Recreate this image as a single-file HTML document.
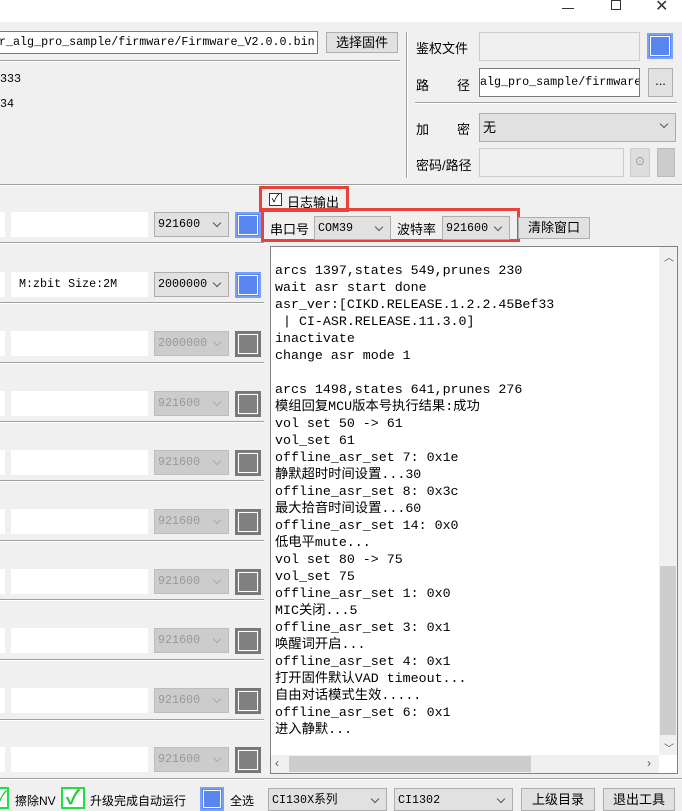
<!DOCTYPE html>
<html><head><meta charset="utf-8"><style>
*{box-sizing:border-box;margin:0;padding:0}
body{width:682px;height:811px;background:#f0f0f0;position:relative;overflow:hidden;font-family:"Liberation Sans","Noto Sans CJK SC",sans-serif;font-size:13px;color:#000}
.a{position:absolute}
.mono{font-family:"Liberation Mono","Noto Sans CJK SC",monospace}
.inp{position:absolute;background:#fff;border:1px solid #7a7a7a}
.btn{position:absolute;background:#e1e1e1;border:1px solid #adadad;text-align:center}
.sel{position:absolute;background:#e1e1e1;border:1px solid #adadad;font-family:"Liberation Mono",monospace;font-size:11.7px;padding-left:3px;line-height:22px}
.sel:after{content:"";position:absolute;right:8px;top:7px;width:5px;height:5px;border-right:1px solid #555;border-bottom:1px solid #555;transform:rotate(45deg)}
.dis{color:#999;background:#ccc;border-color:#bdbdbd}
.dis:after{border-color:#aaa}
.sq{position:absolute;width:26px;height:26px;border:2px solid #7aa0ff;background:#5a86f0;outline:1px solid #fff;outline-offset:-4px}
.sqg{border-color:#777;background:#808080}
.line{position:absolute;height:2px;border-top:1px solid #a0a0a0;border-bottom:1px solid #fff}
.red{position:absolute;border:3px solid #e8433a}
</style></head><body>
<div class="a" style="left:0;top:0;width:682px;height:22px;background:#fff"></div>
<div class="a" style="left:562px;top:8px;width:12px;height:1px;background:#333"></div>
<div class="a" style="left:611px;top:0;width:10px;height:10px;border:1px solid #333"></div>
<div class="a" style="left:655px;top:-4px;font-size:16px;color:#333">✕</div>

<div class="inp mono" style="left:-2px;top:31px;width:320px;height:23px;line-height:21px;font-size:11.7px;white-space:nowrap;overflow:hidden">r_alg_pro_sample/firmware/Firmware_V2.0.0.bin</div>
<div class="btn" style="left:326px;top:32px;width:72px;height:21px;line-height:19px">选择固件</div>
<div class="line" style="left:0;top:60px;width:400px"></div>
<div class="a mono" style="left:0;top:72px;font-size:11.7px">333</div>
<div class="a mono" style="left:0;top:97px;font-size:11.7px">34</div>
<div class="a" style="left:406px;top:32px;width:2px;height:146px;border-left:1px solid #a0a0a0;border-right:1px solid #fff"></div>

<div class="a" style="left:416px;top:38px">鉴权文件</div>
<div class="a" style="left:479px;top:32px;width:161px;height:29px;border:1px solid #ccc;background:#f0f0f0"></div>
<div class="sq" style="left:647px;top:33px"></div>
<div class="a" style="left:416px;top:75px">路</div><div class="a" style="left:457px;top:75px">径</div>
<div class="inp mono" style="left:479px;top:68px;width:161px;height:29px;line-height:27px;overflow:hidden;white-space:nowrap;font-size:11.7px">alg_pro_sample/firmware</div>
<div class="btn" style="left:648px;top:68px;width:25px;height:29px;line-height:24px">...</div>
<div class="line" style="left:415px;top:102px;width:262px"></div>
<div class="a" style="left:416px;top:119px">加</div><div class="a" style="left:457px;top:119px">密</div>
<div class="sel" style="left:479px;top:113px;width:197px;height:29px;line-height:27px;font-size:13px;font-family:'Liberation Sans','Noto Sans CJK SC',sans-serif">无</div>
<div class="a" style="left:416px;top:155px">密码/路径</div>
<div class="a" style="left:479px;top:148px;width:145px;height:29px;border:1px solid #ccc;background:#f0f0f0"></div>
<div class="a" style="left:630px;top:148px;width:20px;height:29px;background:#ddd;border:1px solid #ccc;color:#888;font-size:10px;text-align:center;line-height:27px">⊙</div>
<div class="a" style="left:657px;top:148px;width:18px;height:29px;background:#ccc;border:1px solid #bbb"></div>

<div class="line" style="left:0;top:184px;width:682px"></div>

<div class="red" style="left:259px;top:186px;width:90px;height:26px"></div>
<div class="a" style="left:269px;top:193px;width:13px;height:13px;border:1px solid #333;background:#fff;font-size:11px;line-height:11px;text-align:center">✓</div>
<div class="a" style="left:287px;top:192px">日志输出</div>
<div class="red" style="left:261px;top:208px;width:259px;height:34px"></div>
<div class="a" style="left:270px;top:219px">串口号</div>
<div class="sel" style="left:314px;top:216px;width:77px;height:24px">COM39</div>
<div class="a" style="left:397px;top:219px">波特率</div>
<div class="sel" style="left:442px;top:216px;width:68px;height:24px">921600</div>
<div class="btn" style="left:518px;top:217px;width:72px;height:22px;line-height:20px">清除窗口</div>

<div class="a" style="left:0;top:212px;width:5px;height:25px;background:#fff"></div><div class="a" style="left:11px;top:212px;width:137px;height:25px;background:#fff"></div><div class="sel" style="left:154px;top:212px;width:75px;height:25px">921600</div><div class="sq" style="left:235px;top:212px"></div>
<div class="line" style="left:0;top:242px;width:264px"></div>
<div class="a" style="left:0;top:272px;width:5px;height:25px;background:#fff"></div><div class="a mono" style="left:11px;top:272px;width:137px;height:25px;background:#fff;padding-left:8px;line-height:25px;font-size:11.7px">M:zbit Size:2M</div><div class="sel" style="left:154px;top:272px;width:75px;height:25px">2000000</div><div class="sq" style="left:235px;top:272px"></div>
<div class="line" style="left:0;top:302px;width:264px"></div>
<div class="a" style="left:0;top:331px;width:5px;height:25px;background:#fff"></div><div class="a" style="left:11px;top:331px;width:137px;height:25px;background:#fff"></div><div class="sel dis" style="left:154px;top:331px;width:75px;height:25px">2000000</div><div class="sq sqg" style="left:235px;top:331px"></div>
<div class="line" style="left:0;top:362px;width:264px"></div>
<div class="a" style="left:0;top:391px;width:5px;height:25px;background:#fff"></div><div class="a" style="left:11px;top:391px;width:137px;height:25px;background:#fff"></div><div class="sel dis" style="left:154px;top:391px;width:75px;height:25px">921600</div><div class="sq sqg" style="left:235px;top:391px"></div>
<div class="line" style="left:0;top:421px;width:264px"></div>
<div class="a" style="left:0;top:450px;width:5px;height:25px;background:#fff"></div><div class="a" style="left:11px;top:450px;width:137px;height:25px;background:#fff"></div><div class="sel dis" style="left:154px;top:450px;width:75px;height:25px">921600</div><div class="sq sqg" style="left:235px;top:450px"></div>
<div class="line" style="left:0;top:480px;width:264px"></div>
<div class="a" style="left:0;top:509px;width:5px;height:25px;background:#fff"></div><div class="a" style="left:11px;top:509px;width:137px;height:25px;background:#fff"></div><div class="sel dis" style="left:154px;top:509px;width:75px;height:25px">921600</div><div class="sq sqg" style="left:235px;top:509px"></div>
<div class="line" style="left:0;top:540px;width:264px"></div>
<div class="a" style="left:0;top:569px;width:5px;height:25px;background:#fff"></div><div class="a" style="left:11px;top:569px;width:137px;height:25px;background:#fff"></div><div class="sel dis" style="left:154px;top:569px;width:75px;height:25px">921600</div><div class="sq sqg" style="left:235px;top:569px"></div>
<div class="line" style="left:0;top:599px;width:264px"></div>
<div class="a" style="left:0;top:628px;width:5px;height:25px;background:#fff"></div><div class="a" style="left:11px;top:628px;width:137px;height:25px;background:#fff"></div><div class="sel dis" style="left:154px;top:628px;width:75px;height:25px">921600</div><div class="sq sqg" style="left:235px;top:628px"></div>
<div class="line" style="left:0;top:659px;width:264px"></div>
<div class="a" style="left:0;top:688px;width:5px;height:25px;background:#fff"></div><div class="a" style="left:11px;top:688px;width:137px;height:25px;background:#fff"></div><div class="sel dis" style="left:154px;top:688px;width:75px;height:25px">921600</div><div class="sq sqg" style="left:235px;top:688px"></div>
<div class="line" style="left:0;top:719px;width:264px"></div>
<div class="a" style="left:0;top:747px;width:5px;height:25px;background:#fff"></div><div class="a" style="left:11px;top:747px;width:137px;height:25px;background:#fff"></div><div class="sel dis" style="left:154px;top:747px;width:75px;height:25px">921600</div><div class="sq sqg" style="left:235px;top:747px"></div>

<div class="a" style="left:270px;top:246px;width:408px;height:528px;background:#fff;border:1px solid #828282"></div>
<div class="a mono" style="left:275px;top:262px;font-size:13.3px;line-height:17px;white-space:pre">arcs 1397,states 549,prunes 230
wait asr start done
asr_ver:[CIKD.RELEASE.1.2.2.45Bef33
 | CI-ASR.RELEASE.11.3.0]
inactivate
change asr mode 1

arcs 1498,states 641,prunes 276
模组回复MCU版本号执行结果:成功
vol set 50 -> 61
vol_set 61
offline_asr_set 7: 0x1e
静默超时时间设置...30
offline_asr_set 8: 0x3c
最大拾音时间设置...60
offline_asr_set 14: 0x0
低电平mute...
vol set 80 -> 75
vol_set 75
offline_asr_set 1: 0x0
MIC关闭...5
offline_asr_set 3: 0x1
唤醒词开启...
offline_asr_set 4: 0x1
打开固件默认VAD timeout...
自由对话模式生效.....
offline_asr_set 6: 0x1
进入静默...</div>
<div class="a" style="left:659px;top:247px;width:18px;height:508px;background:#f0f0f0"></div>
<div class="a" style="left:660px;top:566px;width:16px;height:169px;background:#cdcdcd"></div>
<div class="a" style="left:664px;top:249px;font-size:10px;color:#555">︿</div>
<div class="a" style="left:664px;top:740px;font-size:10px;color:#555">﹀</div>
<div class="a" style="left:271px;top:755px;width:388px;height:18px;background:#f0f0f0"></div>
<div class="a" style="left:289px;top:756px;width:242px;height:16px;background:#cdcdcd"></div>
<div class="a" style="left:275px;top:756px;font-size:12px;color:#555">‹</div>
<div class="a" style="left:647px;top:756px;font-size:12px;color:#555">›</div>

<div class="line" style="left:0;top:778px;width:682px"></div>
<div class="a" style="left:-12px;top:787px;width:21px;height:22px;border:2px solid #22dd44;background:#fff;color:#22cc33;font-size:18px;line-height:18px;text-align:right">✓</div>
<div class="a" style="left:15px;top:792px;font-size:12px">擦除NV</div>
<div class="a" style="left:61px;top:787px;width:24px;height:22px;border:2px solid #22dd44;background:#fff;color:#22cc33;font-size:20px;line-height:18px;text-align:center;font-weight:bold">✓</div>
<div class="a" style="left:90px;top:792px;font-size:12px">升级完成自动运行</div>
<div class="sq" style="left:200px;top:787px;width:24px;height:24px"></div>
<div class="a" style="left:230px;top:792px;font-size:12px">全选</div>
<div class="sel" style="left:268px;top:788px;width:119px;height:23px;font-family:'Liberation Mono','Noto Sans CJK SC',monospace">CI130X系列</div>
<div class="sel" style="left:394px;top:788px;width:119px;height:23px">CI1302</div>
<div class="btn" style="left:521px;top:788px;width:74px;height:23px;line-height:21px">上级目录</div>
<div class="btn" style="left:603px;top:788px;width:72px;height:23px;line-height:21px">退出工具</div>
</body></html>
